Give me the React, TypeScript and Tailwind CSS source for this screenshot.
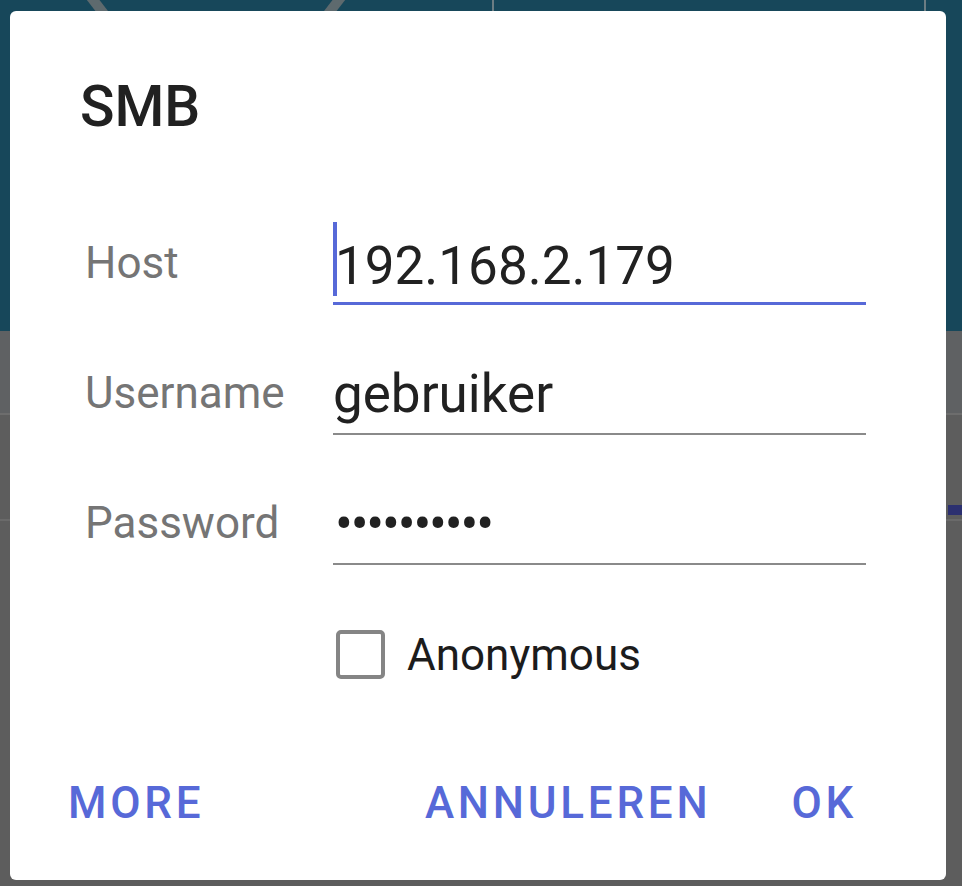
import React from "react";

const blue = "#5769d8";

function Backdrop() {
    return (
        <div className="flex flex-col">
            <div className="relative h-[331px] bg-[#17475a] overflow-hidden">
                <svg className="absolute inset-0" width="962" height="331" viewBox="0 0 962 331">
                    <path d="M70 -30 L104 14" stroke="#5e6a6e" strokeWidth="10" fill="none" />
                    <path d="M362 -30 L328 14" stroke="#5e6a6e" strokeWidth="10" fill="none" />
                    <line x1="493" y1="0" x2="493" y2="24" stroke="#6c7d83" strokeWidth="2" />
                    <line x1="925" y1="0" x2="925" y2="24" stroke="#6c7d83" strokeWidth="2" />
                </svg>
            </div>
            <div className="h-[84px] bg-[#5f6163] border-b-2 border-[#6d6d6d]" />
            <div className="h-[100px] flex justify-end items-end">
                <div className="w-[14px] h-[10px] bg-[#2c3070]" />
            </div>
            <div className="h-[6px] border-b-2 border-[#6a6a6a]" />
        </div>
    );
}

type FieldProps = { label: string; value: string; focused?: boolean; dots?: boolean };

function Field({ label, value, focused, dots }: FieldProps) {
    return (
        <div className="flex items-end h-[130px]">
            <div className="w-[248px] mb-[20px] text-[44px] leading-none text-[#757575]">{label}</div>
            <div
                className={
                    focused
                        ? "relative flex-1 border-b-[3px] border-[#5769d8] pb-[9px]"
                        : "relative flex-1 border-b-2 border-[#8a8a8a] pb-[12px]"
                }
            >
                {focused && <span className="absolute left-0 bottom-[6px] w-[4px] h-[74px] bg-[#5769d8]" />}
                <div
                    className={
                        dots
                            ? "pl-[2px] text-[53px] leading-none text-[#212121] tracking-[-2.2px]"
                            : focused
                              ? "pl-[2px] text-[53px] leading-none text-[#212121]"
                              : "pl-0 text-[53px] leading-none text-[#212121]"
                    }
                >
                    {value}
                </div>
            </div>
        </div>
    );
}

function SmbDialog() {
    return (
        <div className="absolute left-[10px] top-[11px] w-[936px] h-[869px] rounded-[6px] bg-white flex flex-col">
            <h1 className="pt-[67px] pl-[70px] text-[57px] leading-none font-medium text-[#212121]">SMB</h1>
            <div className="mt-[40px] pl-[75px] pr-[80px]">
                <Field label="Host" value="192.168.2.179" focused />
                <Field label="Username" value="gebruiker" />
                <Field label="Password" value="••••••••••" dots />
                <div className="flex items-center mt-[65px] pl-[251px]">
                    <span className="w-[49px] h-[49px] rounded-[5px] border-[4px] border-[#858585]" />
                    <span className="ml-[22px] text-[44px] leading-none text-[#1c1c1c]">Anonymous</span>
                </div>
            </div>
            <div
                className="mt-auto flex items-end pl-[58px] pr-[89px] pb-[55px] text-[44px] leading-none font-medium tracking-[0.085em]"
                style={{ color: blue }}
            >
                <button type="button">MORE</button>
                <div className="flex-1" />
                <button type="button">ANNULEREN</button>
                <button type="button" className="ml-[80px]">OK</button>
            </div>
        </div>
    );
}

export default function App() {
    return (
        <div className="relative w-[962px] h-[886px] overflow-hidden bg-[#5d5d5d] font-['Roboto',sans-serif]">
            <Backdrop />
            <SmbDialog />
        </div>
    );
}
